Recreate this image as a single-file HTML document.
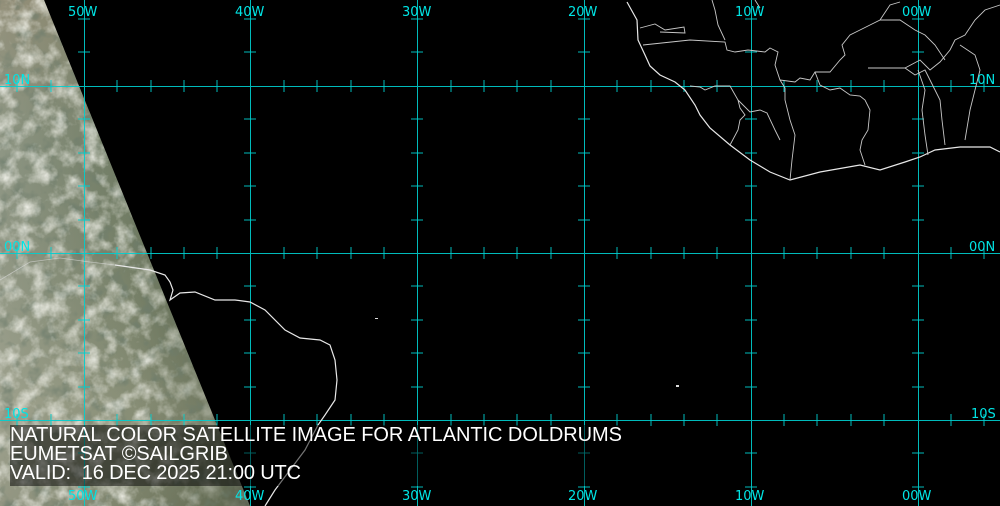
<!DOCTYPE html>
<html><head><meta charset="utf-8"><style>
html,body{margin:0;padding:0;background:#000;width:1000px;height:506px;overflow:hidden}
svg{display:block}
.l{font-family:"DejaVu Sans","Liberation Sans",sans-serif;font-size:13px;fill:#00e5e5}
.t{font-family:"Liberation Sans",sans-serif;font-size:20px;fill:#fff;white-space:pre}
</style></head><body>
<svg width="1000" height="506" viewBox="0 0 1000 506" xmlns="http://www.w3.org/2000/svg">
<defs>
<linearGradient id="g" x1="0" y1="0" x2="1" y2="0">
<stop offset="0" stop-color="#8e9684"/>
<stop offset="0.5" stop-color="#6e7a62"/>
<stop offset="0.85" stop-color="#48573f"/>
<stop offset="1" stop-color="#2f3c30"/>
</linearGradient>
<linearGradient id="v" x1="0" y1="0" x2="0" y2="1">
<stop offset="0" stop-color="#9a8a70" stop-opacity="0.5"/>
<stop offset="0.3" stop-color="#8a8a70" stop-opacity="0"/>
<stop offset="0.8" stop-color="#c8c0a8" stop-opacity="0.3"/>
<stop offset="1" stop-color="#a09880" stop-opacity="0.3"/>
</linearGradient>
<filter id="n"><feTurbulence type="fractalNoise" baseFrequency="0.06" numOctaves="4" seed="5"/><feColorMatrix values="0 0 0 0 0.92  0 0 0 0 0.92  0 0 0 0 0.86  0 0 0 1.8 -0.75"/></filter>
<filter id="d"><feTurbulence type="fractalNoise" baseFrequency="0.07" numOctaves="3" seed="11"/><feColorMatrix values="0 0 0 0 0.15  0 0 0 0 0.2  0 0 0 0 0.15  0 0 0 2 -1.0"/></filter>
<linearGradient id="fade" x1="0" y1="0" x2="1" y2="0"><stop offset="0" stop-color="#fff"/><stop offset="0.55" stop-color="#fff"/><stop offset="0.9" stop-color="#fff" stop-opacity="0.2"/></linearGradient>
<mask id="m"><rect width="260" height="506" fill="url(#fade)"/></mask>
<clipPath id="c"><polygon points="0,0 44,0 250,506 0,506"/></clipPath>
</defs>
<g clip-path="url(#c)">
<rect width="260" height="506" fill="url(#g)"/>
<rect width="260" height="506" fill="url(#v)"/>
<rect width="260" height="506" filter="url(#d)"/>
<rect width="260" height="506" filter="url(#n)" mask="url(#m)"/>
</g>
<g stroke="#00d0d0" stroke-width="1" fill="none" opacity="0.9">
<path d="M84.5,0V506M250.5,0V506M417.5,0V506M584.5,0V506M751.5,0V506M918.5,0V506"/>
<path d="M0,86.5H1000M0,253.5H1000M0,420.5H1000"/>
</g>
<g stroke="#00d0d0" stroke-width="1" opacity="0.9">
<path d="M51,80V92M117,80V92M151,80V92M184,80V92M217,80V92M284,80V92M317,80V92M351,80V92M384,80V92M451,80V92M484,80V92M517,80V92M551,80V92M617,80V92M651,80V92M684,80V92M717,80V92M784,80V92M817,80V92M851,80V92M884,80V92M951,80V92M984,80V92M17,80V92"/>
<path d="M51,247V259M117,247V259M151,247V259M184,247V259M217,247V259M284,247V259M317,247V259M351,247V259M384,247V259M451,247V259M484,247V259M517,247V259M551,247V259M617,247V259M651,247V259M684,247V259M717,247V259M784,247V259M817,247V259M851,247V259M884,247V259M951,247V259M984,247V259M17,247V259"/>
<path d="M51,414V426M117,414V426M151,414V426M184,414V426M217,414V426M284,414V426M317,414V426M351,414V426M384,414V426M451,414V426M484,414V426M517,414V426M551,414V426M617,414V426M651,414V426M684,414V426M717,414V426M784,414V426M817,414V426M851,414V426M884,414V426M951,414V426M984,414V426M17,414V426"/>
</g>
<g stroke="#00d0d0" stroke-width="1" opacity="0.9">
<path id="vt" d="M78,52H90M78,119H90M78,153H90M78,186H90M78,220H90M78,286H90M78,320H90M78,353H90M78,387H90M78,453H90M78,487H90M78,19H90"/>
<use href="#vt" x="166"/><use href="#vt" x="333"/><use href="#vt" x="500"/><use href="#vt" x="667"/><use href="#vt" x="834"/>
</g>
<g stroke="#e8e8e8" stroke-width="1.2" fill="none">
<path d="M627,2L637,20L638,40L645,55L650,66L660,75L675,82L685,90L695,105L700,115L710,128L730,145L750,160L770,172L790,180L820,172L860,165L880,170L905,162L920,157L935,150L960,147L990,147L1000,152"/>
<path d="M115,265L150,270L165,275L170,282L173,290L170,300L180,293L195,292L215,300L235,300L250,302L265,310L285,330L300,338L320,340L330,345L335,360L337,380L335,400L325,415L318,425L305,450L290,470L275,490L265,506"/>
<path d="M0,280L30,262L60,258L90,262L115,265" stroke="#ddd" stroke-width="0.8" opacity="0.6"/>
</g>
<g stroke="#c8c8c8" stroke-width="0.9" fill="none">
<path d="M640,28L655,24L665,30L684,27L685,33L660,32M643,45L690,40L725,42L727,50L735,52L748,50L765,52L770,48L778,52L775,65L780,80L785,88L785,100L790,120L795,135L792,160L790,180"/>
<path d="M712,0L715,10L718,25L725,40M755,0L760,8M690,86L700,87L705,90L715,86L730,86L738,100L740,108L745,115L740,120L738,130L730,145M738,100L750,112L760,110L767,113L775,130L780,140M780,80L795,82L800,78L810,80L815,72L830,72L840,60L845,55L842,45L850,35L860,30L870,25L880,20L890,5L900,2M815,72L820,85L830,90L840,88L850,95L860,96L865,100L870,110L868,130L862,140L860,150L865,165"/>
<path d="M868,68L905,68L915,75L925,70L930,80L935,90L940,100L942,120L945,145M918,70L925,90L922,110L925,135L928,155M905,68L920,60L930,70L940,62L950,50L955,40L965,35L975,20L985,10L1000,5M960,45L975,55L980,70L975,90L970,110L965,140M880,20L900,20L915,30L925,35L935,45L945,60"/>
</g>
<rect x="375" y="318" width="3" height="1" fill="#ddd"/>
<rect x="676" y="385" width="3" height="2" fill="#ddd"/>
<text class="l" x="68" y="16">50W</text><text class="l" x="235" y="16">40W</text><text class="l" x="402" y="16">30W</text><text class="l" x="568" y="16">20W</text><text class="l" x="735" y="16">10W</text><text class="l" x="902" y="16">00W</text>
<text class="l" x="68" y="500">50W</text><text class="l" x="235" y="500">40W</text><text class="l" x="402" y="500">30W</text><text class="l" x="568" y="500">20W</text><text class="l" x="735" y="500">10W</text><text class="l" x="902" y="500">00W</text>
<text class="l" x="4" y="84">10N</text><text class="l" x="4" y="251">00N</text><text class="l" x="4" y="418">10S</text>
<text class="l" x="969" y="84">10N</text><text class="l" x="969" y="251">00N</text><text class="l" x="971" y="418">10S</text>
<rect x="10" y="425" width="612" height="61" fill="#000" opacity="0.5"/>
<text class="t" x="10" y="441" textLength="612">NATURAL COLOR SATELLITE IMAGE FOR ATLANTIC DOLDRUMS</text>
<text class="t" x="10" y="460" textLength="218">EUMETSAT ©SAILGRIB</text>
<text class="t" x="10" y="479" textLength="291" xml:space="preserve">VALID:  16 DEC 2025 21:00 UTC</text>
</svg>
</body></html>
